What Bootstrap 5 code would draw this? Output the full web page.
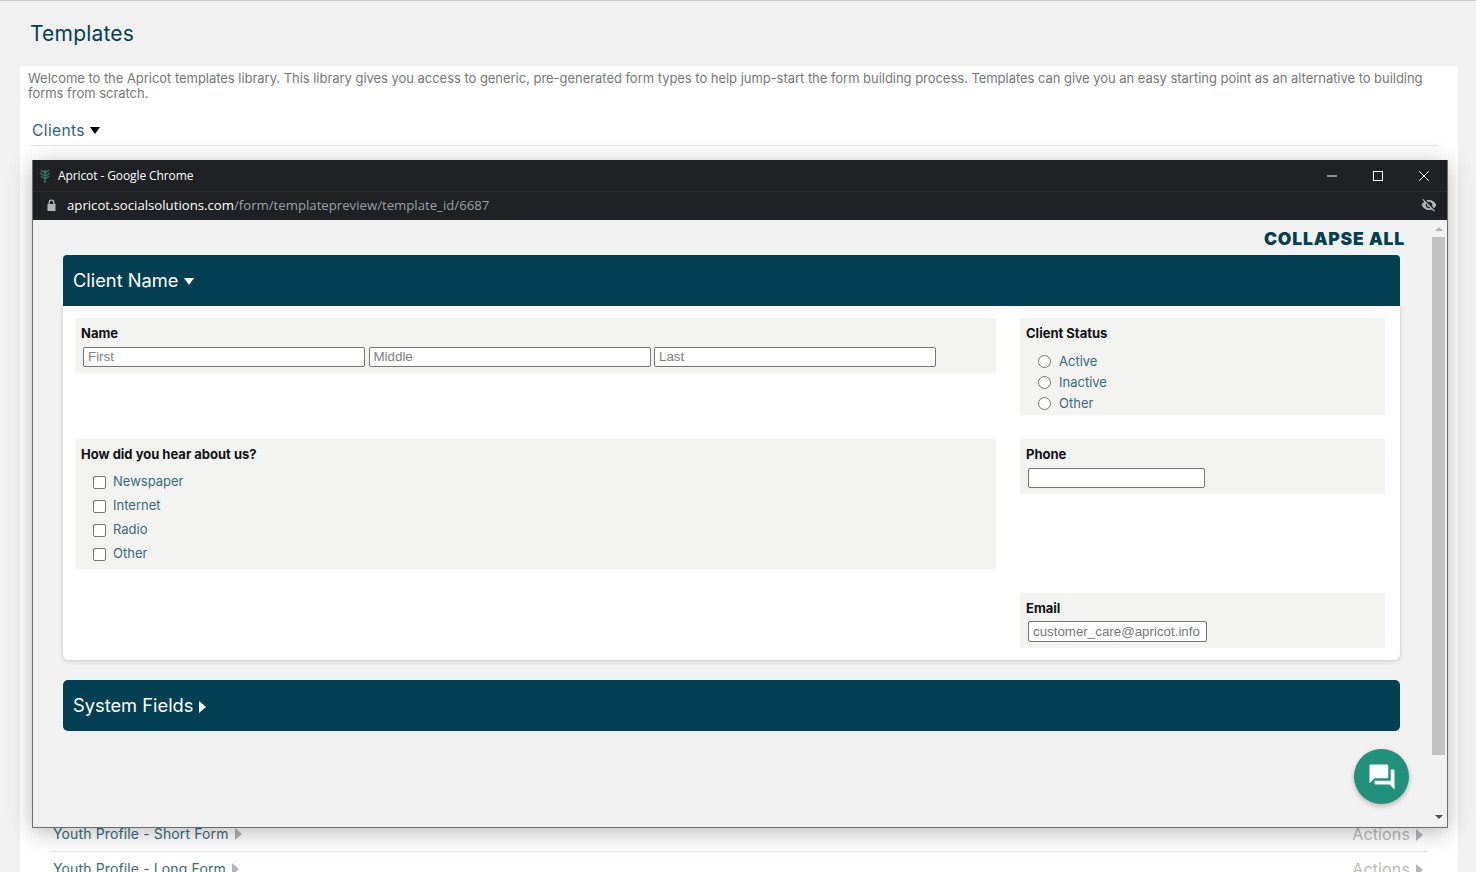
<!DOCTYPE html>
<html lang="en">
<head>
    <meta charset="UTF-8">
    <meta name="viewport" content="width=device-width, initial-scale=1.0">
    <title>Templates</title>
    <link href="https://cdn.jsdelivr.net/npm/bootstrap@5.3.3/dist/css/bootstrap.min.css" rel="stylesheet">
    <style>
        html, body { height: 100%; overflow: hidden; }
        body {
            background: #f1f1f1;
            border-top: 1px solid #c8c8c8;
            font-family: "Inter", "Liberation Sans", sans-serif;
            color: #033f52;
            position: relative;
        }
        .page-title { font-size: 21px; font-weight: 400; margin: 0; padding: 20px 0 0 30px; height: 65px; letter-spacing: .2px; color: #03404f; }
        .lib-panel { margin: 0 18px 0 20px; background: #fff; border-radius: 4px; padding: 5px 8px 0 8px; height: 820px; }
        .intro { font-size: 13px; line-height: 15px; color: #777; margin: 0 0 20px; letter-spacing: -.036px; }
        .section-head { font-size: 15.5px; line-height: 20px; padding: 0 0 5px 2px; margin: 0 12px 0 2px; border-bottom: 1px solid #e8e8e8; height: 25px; color: #2f6272; letter-spacing: .4px; }
        .tri-d { display: inline-block; border-left: 5.5px solid transparent; border-right: 5.5px solid transparent; border-top: 7px solid currentColor; vertical-align: 2px; }
        .tri-r { display: inline-block; border-top: 6px solid transparent; border-bottom: 6px solid transparent; border-left: 7px solid currentColor; vertical-align: -1px; }
        .tpl-list { margin: 671px 22px 0 22px; }
        .tpl-row { height: 35px; border-bottom: 1px solid #e8e8e8; padding: 9px 5px 0 3px; font-size: 14px; line-height: 16px; color: #3b6a78; letter-spacing: .13px; }
        .tpl-row .tri-r { color: #b5b5b5; margin-left: 6px; }
        .tpl-actions { color: #bbb; font-size: 16px; }
        .preview-win {
            position: absolute; left: 32px; top: 159px; width: 1416px; height: 668px;
            background: #f1f1f1; border: 1px solid #6b6b6b; border-top: 0;
            box-shadow: 0 4px 22px rgba(0,0,0,.28);
        }
        .win-title { height: 32px; background: #202124; border-bottom: 1px solid #2c2d30; color: #fff; font: 12px/31px "Open Sans", sans-serif; letter-spacing: -.1px; padding-left: 6px; }
        .win-logo { margin-right: 7px; }
        .win-btns { margin-left: auto; }
        .win-btn { width: 46px; height: 31px; }
        .win-url { height: 28px; background: #202124; font: 13.2px/27px "Open Sans", sans-serif; color: #9aa0a6; padding: 0 10px 2px 13px; }
        .win-url b { font-weight: 400; color: #fff; }
        .win-url svg.lock { margin-right: 10px; }
        .win-body { height: 607px; }
        .win-main { padding: 0 31px 0 30px; flex: 1 1 0; min-width: 0; }
        .collapse-all { text-align: right; font-size: 17.5px; line-height: 20px; font-weight: 900; margin: 9px -5px 6px 0; letter-spacing: .8px; color: #03404f; }
        .sec-bar { height: 51px; background: #033f52; color: #fff; font-size: 18.3px; line-height: 51px; padding-left: 10px; border-radius: 5px; }
        .sec-bar.open { border-radius: 4px 4px 0 0; }
        .sec-card { background: #fff; border-radius: 0 0 6px 6px; box-shadow: 0 1px 4px rgba(0,0,0,.18); padding: 12px 15px 12px 12px; margin-bottom: 20px; height: 354px; }
        .field-row { gap: 24px; margin-bottom: 24px; }
        .field-l { width: 921px; flex: none; }
        .field-r { flex: 1 1 0; }
        .fld { background: #f3f3f2; padding: 7px 6px 0 6px; }
        .fld-short { padding-bottom: 6px; }
        .fld-label { font-size: 13px; line-height: 16px; font-weight: 700; color: #111; margin-bottom: 6px; display: block; }
        .txt-in { display: block; height: 20px; border: 1px solid #767676; border-radius: 2px; background: #fff; font: 13.33px "Liberation Sans", sans-serif; color: #777; padding: 0 4px; margin-left: 2px; }
        .txt-in::placeholder { color: #808080; opacity: 1; }
        .name-in { width: 282px; margin-left: 0; padding-bottom: 2px; }
        .name-set { gap: 3.5px; padding-left: 2px; padding-bottom: 6px; }
        .phone-in { width: 177px; }
        .email-in { width: 179px; height: 21px; margin-top: -1px; }
        .opt { height: 24px; display: flex; align-items: center; padding-left: 12px; font-size: 13px; color: #3b6a78; }
        .opt.rad { height: 21px; }
        .opt input { appearance: none; width: 13px; height: 13px; background: #fff; border: 1px solid #767676; border-radius: 2px; margin: 0 7px 0 0; flex: none; }
        .opt.rad input { border-radius: 50%; margin-right: 8px; }
        .opt-set { padding: 2px 0 3px; }
        .opt-set.radios { padding: 4px 0 1px; }
        .sbar { width: 15px; flex: none; margin-right: 1px; background: #f1f1f1; }
        .sbar-up { border-left: 4px solid transparent; border-right: 4px solid transparent; border-bottom: 4px solid #b5b5b5; margin: 7px auto 0; width: 0; }
        .sbar-thumb { height: 518px; background: #c1c1c1; margin: 6px 0 0 1px; width: 13px; }
        .sbar-down { border-left: 4px solid transparent; border-right: 4px solid transparent; border-top: 4px solid #505050; margin: 60px auto 0; width: 0; }
        .chat-fab { position: absolute; right: 38px; bottom: 23px; width: 55px; height: 55px; border-radius: 50%; background: #21917b; box-shadow: 0 2px 5px rgba(0,0,0,.25); }
    </style>
</head>
<body>
    <h1 class="page-title">Templates</h1>
    <div class="lib-panel">
        <p class="intro">Welcome to the Apricot templates library. This library gives you access to generic, pre-generated form types to help jump-start the form building process. Templates can give you an easy starting point as an alternative to building forms from scratch.</p>
        <div class="section-head">Clients <span class="tri-d text-black"></span></div>
        <div class="tpl-list">
            <div class="tpl-row d-flex justify-content-between"><span>Youth Profile - Short Form<span class="tri-r"></span></span><span class="tpl-actions">Actions<span class="tri-r"></span></span></div>
            <div class="tpl-row d-flex justify-content-between"><span>Youth Profile - Long Form<span class="tri-r"></span></span><span class="tpl-actions">Actions<span class="tri-r"></span></span></div>
        </div>
    </div>

    <div class="preview-win">
        <div class="win-title d-flex align-items-center">
            <svg class="win-logo" width="12" height="14" viewBox="0 0 12 14"><path d="M6 14V1M6 4 2 1M6 4l4-3M6 7 1 4M6 7l5-3M6 10 2 7M6 10l4-3" stroke="#2f7a62" stroke-width="1.4" fill="none"/></svg>
            <span>Apricot - Google Chrome</span>
            <div class="win-btns d-flex">
                <div class="win-btn d-flex align-items-center justify-content-center"><svg width="12" height="12" viewBox="0 0 12 12"><path d="M1 6h10" stroke="#fff"/></svg></div>
                <div class="win-btn d-flex align-items-center justify-content-center"><svg width="12" height="12" viewBox="0 0 12 12"><rect x="1.5" y="1.5" width="9" height="9" fill="none" stroke="#fff"/></svg></div>
                <div class="win-btn d-flex align-items-center justify-content-center"><svg width="12" height="12" viewBox="0 0 12 12"><path d="m1 1 10 10M11 1 1 11" stroke="#fff"/></svg></div>
            </div>
        </div>
        <div class="win-url d-flex align-items-center">
            <svg class="lock" width="11" height="13" viewBox="0 0 11 13"><path d="M2.5 5V3.5a3 3 0 0 1 6 0V5h1v7h-8V5zm1.3 0h3.4V3.5a1.7 1.7 0 0 0-3.4 0z" fill="#b5b5b5"/></svg>
            <span><b>apricot.socialsolutions.com</b>/form/templatepreview/template_id/6687</span>
            <svg class="ms-auto" width="16" height="16" viewBox="0 0 24 24"><path fill="#b5b5b5" d="M12 7c2.76 0 5 2.24 5 5 0 .65-.13 1.26-.36 1.83l2.92 2.92c1.51-1.26 2.7-2.89 3.43-4.75-1.73-4.39-6-7.5-11-7.5-1.4 0-2.74.25-3.98.7l2.16 2.16C10.74 7.13 11.35 7 12 7zM2 4.27l2.28 2.28.46.46C3.08 8.3 1.78 10.02 1 12c1.73 4.39 6 7.5 11 7.5 1.55 0 3.03-.3 4.38-.84l.42.42L19.73 22 21 20.73 3.27 3 2 4.27zM7.53 9.8l1.55 1.55c-.05.21-.08.43-.08.65 0 1.66 1.34 3 3 3 .22 0 .44-.03.65-.08l1.55 1.55c-.67.33-1.41.53-2.2.53-2.76 0-5-2.24-5-5 0-.79.2-1.53.53-2.2z"/></svg>
        </div>
        <div class="win-body d-flex position-relative">
            <div class="win-main">
                <div class="collapse-all">COLLAPSE ALL</div>
                <div class="sec-bar open">Client Name <span class="tri-d"></span></div>
                <div class="sec-card">
                    <div class="d-flex field-row align-items-start">
                        <div class="field-l fld">
                            <label class="fld-label">Name</label>
                            <div class="d-flex name-set">
                                <input class="txt-in name-in" placeholder="First">
                                <input class="txt-in name-in" placeholder="Middle">
                                <input class="txt-in name-in" placeholder="Last">
                            </div>
                        </div>
                        <div class="field-r fld">
                            <label class="fld-label">Client Status</label>
                            <div class="opt-set radios">
                                <label class="opt rad"><input type="radio" name="status">Active</label>
                                <label class="opt rad"><input type="radio" name="status">Inactive</label>
                                <label class="opt rad"><input type="radio" name="status">Other</label>
                            </div>
                        </div>
                    </div>
                    <div class="d-flex field-row align-items-start">
                        <div class="field-l fld">
                            <label class="fld-label">How did you hear about us?</label>
                            <div class="opt-set">
                                <label class="opt"><input type="checkbox">Newspaper</label>
                                <label class="opt"><input type="checkbox">Internet</label>
                                <label class="opt"><input type="checkbox">Radio</label>
                                <label class="opt"><input type="checkbox">Other</label>
                            </div>
                        </div>
                        <div class="field-r fld fld-short">
                            <label class="fld-label">Phone</label>
                            <input class="txt-in phone-in">
                        </div>
                    </div>
                    <div class="d-flex field-row align-items-start">
                        <div class="field-l"></div>
                        <div class="field-r fld fld-short">
                            <label class="fld-label">Email</label>
                            <input class="txt-in email-in" value="customer_care@apricot.info">
                        </div>
                    </div>
                </div>
                <div class="sec-bar">System Fields <span class="tri-r"></span></div>
            </div>
            <div class="sbar">
                <div class="sbar-up"></div>
                <div class="sbar-thumb"></div>
                <div class="sbar-down"></div>
            </div>
            <div class="chat-fab d-flex align-items-center justify-content-center">
                <svg width="30" height="30" viewBox="0 0 24 24"><path fill="#fff" d="M21 6h-2v9H6v2c0 .55.45 1 1 1h11l4 4V7c0-.55-.45-1-1-1zm-4 6V3c0-.55-.45-1-1-1H3c-.55 0-1 .45-1 1v14l4-4h10c.55 0 1-.45 1-1z"/></svg>
            </div>
        </div>
    </div>
</body>
</html>
